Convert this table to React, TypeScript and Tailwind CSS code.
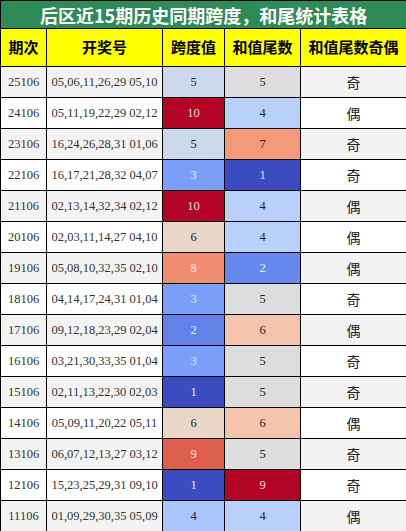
type Row = {
  qi: string;
  nums: string;
  span: number;
  tail: number;
  parity: string;
};

const rows: Row[] = [
  { qi: "25106", nums: "05,06,11,26,29 05,10", span: 5, tail: 5, parity: "奇" },
  { qi: "24106", nums: "05,11,19,22,29 02,12", span: 10, tail: 4, parity: "偶" },
  { qi: "23106", nums: "16,24,26,28,31 01,06", span: 5, tail: 7, parity: "奇" },
  { qi: "22106", nums: "16,17,21,28,32 04,07", span: 3, tail: 1, parity: "奇" },
  { qi: "21106", nums: "02,13,14,32,34 02,12", span: 10, tail: 4, parity: "偶" },
  { qi: "20106", nums: "02,03,11,14,27 04,10", span: 6, tail: 4, parity: "偶" },
  { qi: "19106", nums: "05,08,10,32,35 02,10", span: 8, tail: 2, parity: "偶" },
  { qi: "18106", nums: "04,14,17,24,31 01,04", span: 3, tail: 5, parity: "奇" },
  { qi: "17106", nums: "09,12,18,23,29 02,04", span: 2, tail: 6, parity: "偶" },
  { qi: "16106", nums: "03,21,30,33,35 01,04", span: 3, tail: 5, parity: "奇" },
  { qi: "15106", nums: "02,11,13,22,30 02,03", span: 1, tail: 5, parity: "奇" },
  { qi: "14106", nums: "05,09,11,20,22 05,11", span: 6, tail: 6, parity: "偶" },
  { qi: "13106", nums: "06,07,12,13,27 03,12", span: 9, tail: 5, parity: "奇" },
  { qi: "12106", nums: "15,23,25,29,31 09,10", span: 1, tail: 9, parity: "奇" },
  { qi: "11106", nums: "01,09,29,30,35 05,09", span: 4, tail: 4, parity: "偶" },
];

// coolwarm-ish cell colours
const spanStyle: Record<number, string> = {
  1: "bg-[#3b4cc0] text-[#e8ecf8]",
  2: "bg-[#6282ea] text-[#eef1fb]",
  3: "bg-[#7b9ff9] text-[#e6ecfb]",
  4: "bg-[#aac7fd] text-[#222]",
  5: "bg-[#ccd9ed] text-[#222]",
  6: "bg-[#ead5c9] text-[#222]",
  8: "bg-[#f08d6e] text-[#fbeee8]",
  9: "bg-[#dd5f4b] text-[#fbe9e5]",
  10: "bg-[#b40426] text-[#f5dde1]",
};

const tailStyle: Record<number, string> = {
  1: "bg-[#3b4cc0] text-[#e8ecf8]",
  2: "bg-[#6788ee] text-[#eef1fb]",
  4: "bg-[#b9d0f9] text-[#222]",
  5: "bg-[#dcdddd] text-[#222]",
  6: "bg-[#f5c4ac] text-[#222]",
  7: "bg-[#f49a7b] text-[#222]",
  9: "bg-[#b40426] text-[#f5dde1]",
};

const serif = "font-['Liberation_Serif','DejaVu_Serif',serif]";
const cjk = "font-['Noto_Sans_CJK_SC','Noto_Sans',sans-serif]";

export default function App() {
  return (
    <div className="w-[406px] h-[531px] overflow-hidden bg-white">
      <table className="w-[406px] table-fixed border-collapse">
        <colgroup>
          <col className="w-[46px]" />
          <col className="w-[116px]" />
          <col className="w-[62px]" />
          <col className="w-[76px]" />
          <col className="w-[106px]" />
        </colgroup>
        <thead>
          <tr className="h-[28px]">
            <th
              colSpan={5}
              className={`bg-[#2e8a57] text-white text-[18px] font-bold leading-none border border-black ${cjk}`}
            >
              后区近15期历史同期跨度，和尾统计表格
            </th>
          </tr>
          <tr className="h-[38px] bg-[#ffff00]">
            {["期次", "开奖号", "跨度值", "和值尾数", "和值尾数奇偶"].map((h) => (
              <th key={h} className={`border border-black text-[15px] font-bold text-black ${cjk}`}>
                {h}
              </th>
            ))}
          </tr>
        </thead>
        <tbody>
          {rows.map((r, i) => {
            const bg = i % 2 === 0 ? "bg-[#f3f3f3]" : "bg-white";
            return (
              <tr key={r.qi} className="h-[31px]">
                <td className={`border border-black text-center text-[12.5px] text-[#333] ${serif} ${bg}`}>{r.qi}</td>
                <td className={`border border-black text-center text-[12.5px] text-[#333] whitespace-nowrap ${serif} ${bg}`}>
                  {r.nums}
                </td>
                <td className={`border border-black text-center text-[12.5px] ${serif} ${spanStyle[r.span]}`}>{r.span}</td>
                <td className={`border border-black text-center text-[12.5px] ${serif} ${tailStyle[r.tail]}`}>{r.tail}</td>
                <td className={`border border-black text-center text-[14px] text-[#222] ${cjk} ${bg}`}>{r.parity}</td>
              </tr>
            );
          })}
        </tbody>
      </table>
    </div>
  );
}
